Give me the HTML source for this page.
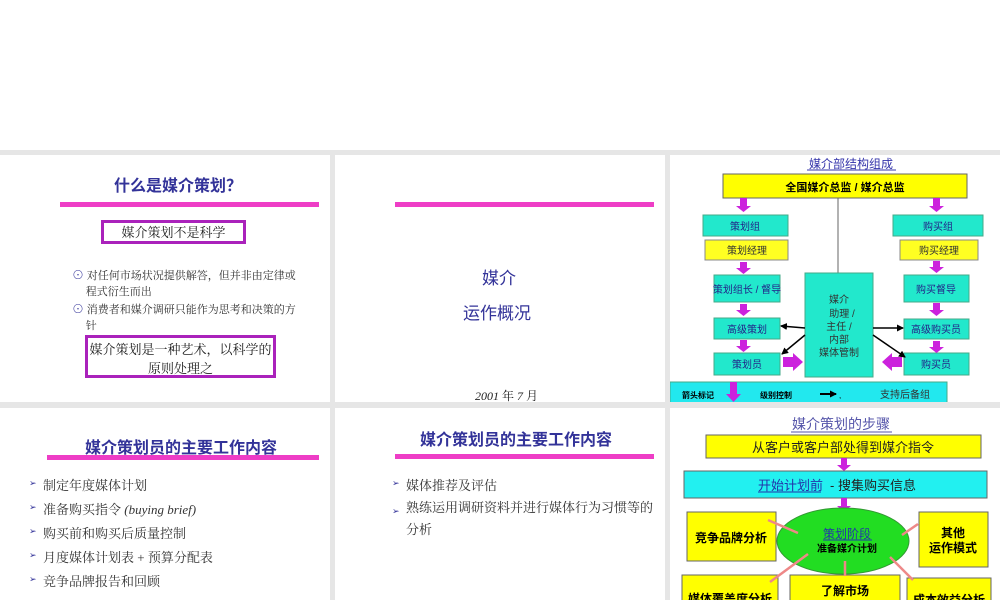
<!DOCTYPE html>
<html><head><meta charset="utf-8"><style>
*{margin:0;padding:0;box-sizing:border-box}
body{width:1000px;height:600px;background:#fff;position:relative;overflow:hidden;font-family:"Liberation Sans","Noto Sans CJK SC",sans-serif}
.band{position:absolute;left:0;top:150px;width:1000px;height:450px;background:#e6e6e6}
.p{position:absolute;background:#fff;overflow:hidden}
.a{position:absolute;white-space:nowrap}
.bar{position:absolute;height:5px;background:#ee3dc6}
.t{color:#333399;font-weight:bold}
.serif{font-family:"Liberation Serif","Noto Serif CJK SC",serif}
.li{position:absolute;font-size:13px;color:#333;font-family:"Liberation Serif","Noto Serif CJK SC",serif}
.li:before{content:"➢";color:#333399;font-size:9px;position:absolute;left:-14px;top:3px}
</style></head><body>
<div class="band"></div>

<div class="p" style="left:0;top:155px;width:330px;height:247px">
 <div class="a t" style="left:114px;top:17px;font-size:16px">什么是媒介策划？</div>
 <div class="bar" style="left:60px;top:47px;width:259px"></div>
 <div class="a serif" style="left:101px;top:65px;width:145px;height:24px;border:3px solid #aa22bb;font-size:13px;text-align:center;line-height:20px;color:#222">媒介策划不是科学</div>
 <div class="a serif" style="left:72px;top:112px;font-size:11px;line-height:16px;color:#333"><span style="color:#333399;font-size:12px">⊙</span> 对任何市场状况提供解答，但并非由定律或<br>&nbsp;&nbsp;&nbsp;&nbsp;&nbsp;程式衍生而出</div>
 <div class="a serif" style="left:72px;top:146px;font-size:11px;line-height:16px;color:#333"><span style="color:#333399;font-size:12px">⊙</span> 消费者和媒介调研只能作为思考和决策的方<br>&nbsp;&nbsp;&nbsp;&nbsp;&nbsp;针</div>
 <div class="a serif" style="left:85px;top:180px;width:191px;height:43px;border:3px solid #aa22bb;font-size:13px;text-align:center;line-height:19px;padding-top:2px;color:#222">媒介策划是一种艺术，以科学的<br>原则处理之</div>
</div>

<div class="p" style="left:335px;top:155px;width:330px;height:247px">
 <div class="bar" style="left:60px;top:47px;width:259px"></div>
 <div class="a" style="left:147px;top:109px;font-size:17px;color:#333399">媒介</div>
 <div class="a" style="left:128px;top:144px;font-size:17px;color:#333399">运作概况</div>
 <div class="a serif" style="left:140px;top:232px;font-size:12px;color:#222"><i>2001</i> 年 <i>7</i> 月</div>
</div>

<div class="p" style="left:670px;top:155px;width:330px;height:247px">
<svg width="330" height="247" style="position:absolute;left:0;top:0" font-family="Liberation Sans,Noto Sans CJK SC,sans-serif">
 <defs><marker id="ah" markerUnits="userSpaceOnUse" markerWidth="7" markerHeight="7" refX="6" refY="3.5" orient="auto"><path d="M0,0L7,3.5L0,7z" fill="#000"/></marker></defs>
 <text x="181" y="13" font-size="12" fill="#3333aa" text-anchor="middle">媒介部结构组成</text>
 <line x1="137" y1="15" x2="226" y2="15" stroke="#3333aa"/>
 <rect x="53" y="19" width="244" height="24" fill="#ffff00" stroke="#666"/>
 <text x="175" y="36" font-size="11" font-weight="bold" text-anchor="middle">全国媒介总监 / 媒介总监</text>
 <line x1="168" y1="43" x2="168" y2="118" stroke="#666"/>
 <g fill="#22e8cc" stroke="#4a8"><rect x="33" y="60" width="85" height="21"/><rect x="223" y="60" width="90" height="21"/>
 <rect x="44" y="120" width="66" height="27"/><rect x="44" y="163" width="66" height="21"/><rect x="44" y="198" width="66" height="22"/>
 <rect x="234" y="120" width="65" height="27"/><rect x="234" y="164" width="65" height="20"/><rect x="234" y="198" width="65" height="22"/>
 <rect x="135" y="118" width="68" height="104"/></g>
 <g fill="#ffff22" stroke="#888"><rect x="35" y="85" width="83" height="20"/><rect x="230" y="85" width="78" height="20"/></g>
 <g font-size="10" text-anchor="middle" fill="#228">
 <text x="75" y="75">策划组</text><text x="268" y="75">购买组</text>
 <text x="77" y="99" fill="#333">策划经理</text><text x="269" y="99" fill="#333">购买经理</text>
 <text x="77" y="138">策划组长 / 督导</text><text x="77" y="178">高级策划</text><text x="77" y="213">策划员</text>
 <text x="266" y="138">购买督导</text><text x="266" y="178">高级购买员</text><text x="266" y="213">购买员</text>
 <text x="169" y="148" fill="#333">媒介</text><text x="172" y="162" fill="#333">助理 /</text><text x="169" y="175" fill="#333">主任 /</text><text x="169" y="188" fill="#333">内部</text><text x="169" y="201" fill="#333">媒体管制</text></g>
 <g fill="#cc22dd"><path d="M70,43h7v8h4l-7.5,6l-7.5,-6h4z"/><path d="M263,43h7v8h4l-7.5,6l-7.5,-6h4z"/>
 <path d="M70,107h7v6h4l-7.5,6l-7.5,-6h4z"/><path d="M70,149h7v6h4l-7.5,6l-7.5,-6h4z"/><path d="M70,185h7v6h4l-7.5,6l-7.5,-6h4z"/>
 <path d="M263,106h7v6h4l-7.5,6l-7.5,-6h4z"/><path d="M263,148h7v7h4l-7.5,6l-7.5,-6h4z"/><path d="M263,186h7v6h4l-7.5,6l-7.5,-6h4z"/>
 <path d="M113,202h10v-4l10,9l-10,9v-4h-10z"/><path d="M232,202h-10v-4l-10,9l10,9v-4h10z"/></g>
 <g stroke="#000" stroke-width="1.5" marker-end="url(#ah)"><line x1="135" y1="173" x2="111" y2="171"/><line x1="135" y1="180" x2="112" y2="199"/><line x1="203" y1="173" x2="233" y2="173"/><line x1="203" y1="180" x2="235" y2="202"/></g>
 <rect x="0" y="227" width="277" height="22" fill="#22e8ee" stroke="#4a8"/>
 <path d="M60,227h7v12h4l-7.5,8l-7.5,-8h4z" fill="#cc22dd"/>
 <text x="12" y="243" font-size="8" font-weight="bold">箭头标记</text><text x="90" y="243" font-size="8" font-weight="bold">级别控制</text>
 <line x1="150" y1="239" x2="166" y2="239" stroke="#000" stroke-width="2" marker-end="url(#ah)"/>
 <text x="169" y="243" font-size="8">,</text>
 <text x="210" y="243" font-size="10" fill="#333">支持后备组</text>
</svg></div>

<div class="p" style="left:0;top:408px;width:330px;height:192px">
 <div class="a t" style="left:85px;top:26px;font-size:16px">媒介策划员的主要工作内容</div>
 <div class="bar" style="left:47px;top:47px;width:272px"></div>
 <div class="li" style="left:43px;top:67px">制定年度媒体计划</div>
 <div class="li" style="left:43px;top:91px">准备购买指令 <i>(buying brief)</i></div>
 <div class="li" style="left:43px;top:115px">购买前和购买后质量控制</div>
 <div class="li" style="left:43px;top:139px">月度媒体计划表 + 预算分配表</div>
 <div class="li" style="left:43px;top:163px">竞争品牌报告和回顾</div>
</div>

<div class="p" style="left:335px;top:408px;width:330px;height:192px">
 <div class="a t" style="left:85px;top:18px;font-size:16px">媒介策划员的主要工作内容</div>
 <div class="bar" style="left:60px;top:46px;width:259px"></div>
 <div class="li" style="left:71px;top:67px">媒体推荐及评估</div>
 <div class="li" style="left:71px;top:89px;line-height:22px;white-space:normal;width:250px">熟练运用调研资料并进行媒体行为习惯等的分析</div>
</div>

<div class="p" style="left:670px;top:408px;width:330px;height:192px">
<svg width="330" height="192" style="position:absolute;left:0;top:0" font-family="Liberation Sans,Noto Sans CJK SC,sans-serif">
 <text x="171" y="21" font-size="14" fill="#5555aa" text-anchor="middle">媒介策划的步骤</text>
 <line x1="121" y1="24" x2="222" y2="24" stroke="#5555aa"/>
 <rect x="36" y="27" width="275" height="23" fill="#ffff00" stroke="#666"/>
 <text x="173" y="44" font-size="13" text-anchor="middle" fill="#222">从客户或客户部处得到媒介指令</text>
 <path d="M171,50h6v7h4l-7,6l-7,-6h4z" fill="#cc22dd"/>
 <rect x="14" y="63" width="303" height="27" fill="#22f0f0" stroke="#666"/>
 <text x="88" y="82" font-size="13" fill="#2233aa">开始计划前</text>
 <line x1="88" y1="84" x2="151" y2="84" stroke="#2233aa"/>
 <text x="160" y="82" font-size="13" fill="#222">- 搜集购买信息</text>
 <path d="M171,90h6v8h4l-7,6l-7,-6h4z" fill="#cc22dd"/>
 <rect x="17" y="104" width="89" height="49" fill="#ffff00" stroke="#666"/>
 <text x="61" y="134" font-size="12" font-weight="bold" text-anchor="middle">竞争品牌分析</text>
 <rect x="249" y="104" width="69" height="55" fill="#ffff00" stroke="#666"/>
 <text x="283" y="129" font-size="12" font-weight="bold" text-anchor="middle">其他</text>
 <text x="283" y="144" font-size="12" font-weight="bold" text-anchor="middle">运作模式</text>
 <ellipse cx="173" cy="133" rx="66" ry="33" fill="#22dd22" stroke="#393"/>
 <text x="177" y="130" font-size="12" fill="#2233aa" text-anchor="middle">策划阶段</text>
 <line x1="153" y1="132" x2="202" y2="132" stroke="#2233aa"/>
 <text x="177" y="144" font-size="10" font-weight="bold" text-anchor="middle">准备媒介计划</text>
 <rect x="12" y="167" width="96" height="30" fill="#ffff00" stroke="#666"/>
 <text x="60" y="195" font-size="12" font-weight="bold" text-anchor="middle">媒体覆盖度分析</text>
 <rect x="120" y="167" width="110" height="30" fill="#ffff00" stroke="#666"/>
 <text x="175" y="187" font-size="12" font-weight="bold" text-anchor="middle">了解市场</text>
 <rect x="237" y="170" width="84" height="30" fill="#ffff00" stroke="#666"/>
 <text x="279" y="196" font-size="12" font-weight="bold" text-anchor="middle">成本效益分析</text>
 <g stroke="#ee8888" stroke-width="2.5"><line x1="98" y1="112" x2="128" y2="125"/><line x1="248" y1="116" x2="232" y2="127"/><line x1="100" y1="174" x2="138" y2="146"/><line x1="175" y1="168" x2="175" y2="153"/><line x1="243" y1="172" x2="220" y2="149"/></g>
</svg></div>
</body></html>
